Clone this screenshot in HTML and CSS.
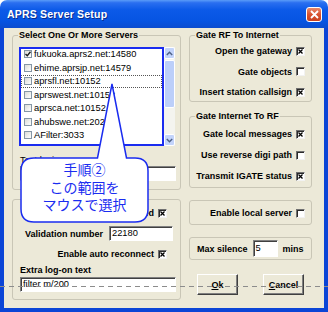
FILE: index.html
```html
<!DOCTYPE html>
<html>

<head>
    <meta charset="utf-8">
    <title>APRS Server Setup</title>
    <link rel="stylesheet" href="styles.css">
</head>

<body>
    <div class="window">
        <div class="titlebar">
            <span class="title">APRS Server Setup</span>
            <span class="close">
                <svg width="9" height="9" viewBox="0 0 9 9"><path d="M1 1L8 8M8 1L1 8" stroke="#fff" stroke-width="1.8" /></svg>
            </span>
        </div>
        <div class="content">
            <div class="col-left">
                <div class="group servers">
                    <span class="group-title">Select One Or More Servers</span>
                    <div class="listbox">
                        <div class="list">
                            <div class="list-item"><span class="cb"><svg width="6" height="6" viewBox="0 0 6 6"><path d="M0.5 3L2.3 4.8L5.5 0.8" stroke="#1a1a1a" stroke-width="1.4" fill="none" /></svg></span>fukuoka.aprs2.net:14580</div>
                            <div class="list-item"><span class="cb"></span>ehime.aprsjp.net:14579</div>
                            <div class="list-item focus"><span class="cb"></span>aprsfl.net:10152</div>
                            <div class="list-item"><span class="cb"></span>aprswest.net:10152</div>
                            <div class="list-item"><span class="cb"></span>aprsca.net:10152</div>
                            <div class="list-item"><span class="cb"></span>ahubswe.net:2023</div>
                            <div class="list-item"><span class="cb"></span>AFilter:3033</div>
                        </div>
                        <div class="scrollbar">
                            <div class="sb-btn"><svg width="7" height="5" viewBox="0 0 7 5"><path d="M0.8 4L3.5 1.2L6.2 4" stroke="#4d6185" stroke-width="1.4" fill="none" /></svg></div>
                            <div class="sb-thumb"></div>
                            <div class="sb-track"></div>
                            <div class="sb-btn"><svg width="7" height="5" viewBox="0 0 7 5"><path d="M0.8 1L3.5 3.8L6.2 1" stroke="#4d6185" stroke-width="1.4" fill="none" /></svg></div>
                        </div>
                    </div>
                    <div class="field-label">Test login</div>
                    <div class="textbox wide"></div>
                </div>
                <div class="group login">
                    <div class="check-row">Log on when connected <span class="xbox"><svg width="5" height="5" viewBox="0 0 5 5"><path d="M0.5 0.5L4.5 4.5M4.5 0.5L0.5 4.5" stroke="#000" stroke-width="1.3" /></svg></span></div>
                    <div class="field-row">
                        <span>Validation number</span>
                        <span class="textbox number">22180</span>
                    </div>
                    <div class="check-row">Enable auto reconnect <span class="xbox"><svg width="5" height="5" viewBox="0 0 5 5"><path d="M0.5 0.5L4.5 4.5M4.5 0.5L0.5 4.5" stroke="#000" stroke-width="1.3" /></svg></span></div>
                    <div class="field-label bold">Extra log-on text</div>
                    <div class="textbox wide">filter m/200</div>
                </div>
            </div>

            <div class="col-right">
                <div class="group rf-inet">
                    <span class="group-title">Gate RF To Internet</span>
                    <div class="opt-row">Open the gateway <span class="xbox"><svg width="5" height="5" viewBox="0 0 5 5"><path d="M0.5 0.5L4.5 4.5M4.5 0.5L0.5 4.5" stroke="#000" stroke-width="1.3" /></svg></span></div>
                    <div class="opt-row">Gate objects <span class="xbox"></span></div>
                    <div class="opt-row">Insert station callsign <span class="xbox"><svg width="5" height="5" viewBox="0 0 5 5"><path d="M0.5 0.5L4.5 4.5M4.5 0.5L0.5 4.5" stroke="#000" stroke-width="1.3" /></svg></span></div>
                </div>
                <div class="group inet-rf">
                    <span class="group-title">Gate Internet To RF</span>
                    <div class="opt-row tall">Gate local messages <span class="xbox"><svg width="5" height="5" viewBox="0 0 5 5"><path d="M0.5 0.5L4.5 4.5M4.5 0.5L0.5 4.5" stroke="#000" stroke-width="1.3" /></svg></span></div>
                    <div class="opt-row tall">Use reverse digi path <span class="xbox"></span></div>
                    <div class="opt-row tall">Transmit IGATE status <span class="xbox"><svg width="5" height="5" viewBox="0 0 5 5"><path d="M0.5 0.5L4.5 4.5M4.5 0.5L0.5 4.5" stroke="#000" stroke-width="1.3" /></svg></span></div>
                </div>
                <div class="group local">
                    <div class="opt-row short">Enable local server <span class="xbox"></span></div>
                </div>
                <div class="group silence">
                    <span>Max silence</span>
                    <span class="textbox mins-box">5</span>
                    <span class="mins">mins</span>
                </div>
                <div class="buttons">
                    <span class="btn"><u>O</u>k</span>
                    <span class="btn"><u>C</u>ancel</span>
                </div>
            </div>
        </div>

        <!-- annotation drawn over the dialog -->
        <svg class="callout" width="328" height="312" viewBox="0 0 328 312">
            <path d="M112 84 L126.5 158 L135 158 Q148 158 148 171 L148 209 Q148 222 135 222 L34 222 Q21 222 21 209 L21 171 Q21 158 34 158 L97.5 158 Z" fill="#fff" stroke="#1a2cf0" stroke-width="1.5" />
        </svg>
        <div class="callout-text">手順②<br>この範囲を<br>マウスで選択</div>
        <div class="guide-line"></div>
    </div>
</body>

</html>
```

FILE: styles.css
```css
body {
    margin: 0;
    background: #ffffff;
    font-family: "Liberation Sans", Arial, sans-serif;
    font-size: 9px;
    color: #000;
}

.window {
    position: relative;
    width: 328px;
    height: 312px;
    display: flex;
    flex-direction: column;
}

.titlebar {
    height: 28px;
    display: flex;
    align-items: center;
    justify-content: space-between;
    padding: 0 6px 0 7px;
    border-radius: 7px 7px 0 0;
    background: linear-gradient(#5a9cf8 0%, #2a6ff0 10%, #0c5ae8 35%, #0654e2 75%, #0b4ccf 100%);
}

.title {
    color: #fff;
    font-weight: bold;
    font-size: 10.5px;
    letter-spacing: 0.2px;
    text-shadow: 1px 1px #0a2c8c;
}

.close {
    width: 16px;
    height: 15px;
    box-sizing: border-box;
    display: flex;
    align-items: center;
    justify-content: center;
    border: 1px solid #fff;
    border-radius: 3px;
    background: linear-gradient(#e98a6c, #d9532f 50%, #c8401e);
}

.content {
    flex: 1;
    display: flex;
    gap: 8px;
    padding: 7px 12px 0 8px;
    background: #ece9d8;
    border: 4px solid #0b45d6;
    border-top: 0;
}

.col-left {
    width: 169px;
    display: flex;
    flex-direction: column;
}

.col-right {
    flex: 1;
    display: flex;
    flex-direction: column;
}

.group {
    box-sizing: border-box;
    border: 1px solid #c9c6b6;
    border-radius: 3px;
}

.group-title {
    display: block;
    width: max-content;
    margin: -6px 0 0 5px;
    padding: 0 1px;
    line-height: 11px;
    font-weight: bold;
    background: #ece9d8;
}

/* left column */

.servers {
    height: 155px;
}

.login {
    height: 101px;
    margin-top: 9px;
    padding-top: 6px;
}

.listbox {
    display: flex;
    width: 156px;
    height: 99px;
    margin: 6px 0 0 6px;
}

.list {
    flex: 1;
    border: 2px solid #1a2cf0;
    background: #fff;
    overflow: hidden;
}

.list-item {
    height: 13.5px;
    display: flex;
    align-items: center;
    gap: 2px;
    padding-left: 3px;
    font-size: 9.3px;
}

.list-item:first-child {
    margin-top: -1.5px;
}

.list-item.focus {
    outline: 1px dotted #555;
    outline-offset: -1px;
}

.cb {
    width: 8px;
    height: 8px;
    box-sizing: border-box;
    border: 1px solid #8596a6;
    background: linear-gradient(135deg, #dcdcd6, #fff);
    display: flex;
    align-items: center;
    justify-content: center;
}

.scrollbar {
    width: 11px;
    display: flex;
    flex-direction: column;
    background: #f4f4ef;
}

.sb-btn {
    height: 12px;
    box-sizing: border-box;
    display: flex;
    align-items: center;
    justify-content: center;
    border: 1px solid #fff;
    border-radius: 2px;
    background: #c3d4fb;
}

.sb-thumb {
    height: 48px;
    margin-top: 1px;
    box-sizing: border-box;
    border: 1px solid #fff;
    border-radius: 2px;
    background: #bccffa;
}

.sb-track {
    flex: 1;
}

.field-label {
    margin: 8px 0 0 7px;
    line-height: 12px;
    font-size: 9.3px;
}

.field-label.bold {
    font-size: 9px;
    font-weight: bold;
    margin: 3px 0 0 7px;
}

.textbox {
    display: block;
    height: 15px;
    box-sizing: border-box;
    background: #fff;
    border: 1px solid;
    border-color: #808080 #fff #fff #808080;
    box-shadow: inset 1px 1px #404040;
    font-size: 9.3px;
    font-weight: normal;
    line-height: 13px;
    padding-left: 2px;
}

.textbox.wide {
    width: 156px;
    margin: 0 0 0 7px;
}

.login .textbox.wide {
    margin-top: 1px;
}

.check-row {
    height: 14px;
    display: flex;
    justify-content: flex-end;
    align-items: center;
    gap: 4px;
    padding-right: 13px;
    font-weight: bold;
}

.check-row + .field-row,
.field-row + .check-row {
    margin-top: 6px;
}

.field-row {
    display: flex;
    align-items: center;
    gap: 6px;
    padding-left: 12px;
    font-weight: bold;
}

.textbox.number {
    width: 64px;
}

.xbox {
    width: 9px;
    height: 9px;
    box-sizing: border-box;
    display: flex;
    align-items: center;
    justify-content: center;
    background: #fff;
    border: 1px solid;
    border-color: #707070 #f2f2f2 #f2f2f2 #707070;
    box-shadow: inset 1px 1px #2a2a2a;
}

/* right column */

.rf-inet {
    height: 67px;
}

.inet-rf {
    height: 72px;
    margin-top: 14px;
}

.inet-rf .opt-row:first-of-type {
    margin-top: 1.5px;
}

.local {
    height: 25px;
    margin-top: 12px;
    padding-top: 5px;
}

.silence {
    height: 23px;
    margin-top: 12px;
    display: flex;
    align-items: center;
    gap: 5px;
    padding-left: 7px;
    font-weight: bold;
}

.opt-row {
    height: 20.5px;
    display: flex;
    justify-content: flex-end;
    align-items: center;
    gap: 4px;
    padding-right: 6px;
    font-weight: bold;
}

.opt-row.tall {
    height: 21px;
}

.opt-row.short {
    height: 14px;
}

.textbox.mins-box {
    width: 25px;
    height: 17px;
    line-height: 15px;
}

.buttons {
    display: flex;
    gap: 25px;
    margin-top: 14px;
    padding-left: 8px;
}

.btn {
    width: 41px;
    height: 21px;
    box-sizing: border-box;
    display: flex;
    align-items: center;
    justify-content: center;
    font-weight: bold;
    background: #ece9d8;
    border: 1px solid;
    border-color: #fff #404040 #404040 #fff;
    box-shadow: inset -1px -1px #808080;
}

/* annotation */

.callout {
    position: absolute;
    left: 0;
    top: 0;
    pointer-events: none;
}

.callout-text {
    position: absolute;
    left: 21px;
    top: 161px;
    width: 127px;
    text-align: center;
    font-family: "Noto Sans CJK JP", sans-serif;
    font-size: 14px;
    line-height: 17.5px;
    color: #1a2cf0;
}

.guide-line {
    position: absolute;
    left: 0;
    top: 286px;
    width: 328px;
    height: 1px;
    background: repeating-linear-gradient(to right, #8c8c8c 0 5px, transparent 5px 9px);
}
```
